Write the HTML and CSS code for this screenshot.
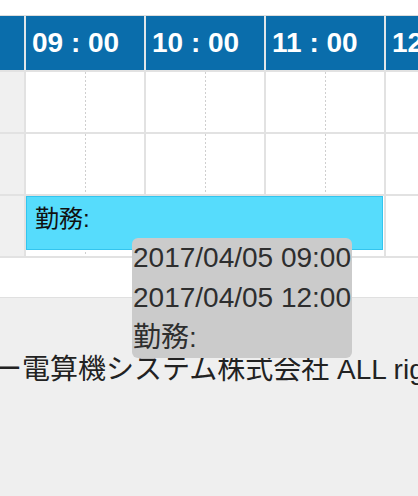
FILE: index.html
```html
<!DOCTYPE html>
<html lang="ja">
<head>
<meta charset="utf-8">
<title>勤務スケジュール</title>
<link rel="stylesheet" href="styles.css">
</head>
<body>
<div class="scheduler">
  <div class="row head">
    <div class="cell corner"></div>
    <div class="cell hour">09 : 00</div>
    <div class="cell hour">10 : 00</div>
    <div class="cell hour">11 : 00</div>
    <div class="cell hour">12 : 00</div>
  </div>
  <div class="row body">
    <div class="cell side"></div>
    <div class="cell slot"></div>
    <div class="cell slot"></div>
    <div class="cell slot"></div>
    <div class="cell slot"></div>
  </div>
  <div class="row body">
    <div class="cell side"></div>
    <div class="cell slot"></div>
    <div class="cell slot"></div>
    <div class="cell slot"></div>
    <div class="cell slot"></div>
  </div>
  <div class="row body last">
    <div class="cell side"></div>
    <div class="cell slot"></div>
    <div class="cell slot"></div>
    <div class="cell slot"></div>
    <div class="cell slot"></div>
    <div class="event">勤務:</div>
    <div class="tooltip">
      <div>2017/04/05 09:00</div>
      <div>2017/04/05 12:00</div>
      <div>勤務:</div>
    </div>
  </div>
</div>
<footer class="footer">
  <p class="copy">©2017 センター電算機システム株式会社 ALL rights reserved.</p>
</footer>
</body>
</html>
```
FILE: styles.css
```css
html, body {
  margin: 0;
  padding: 0;
  background: #ffffff;
  font-family: "Liberation Sans", "Noto Sans CJK JP", sans-serif;
  color: #333333;
  overflow: hidden;
}

.scheduler {
  margin-top: 15px;
  margin-bottom: 39px;
  border-top: 1px solid #dcdcdc;
  border-bottom: 2px solid #e2e2e2;
  position: relative;
  z-index: 2;
}

.row {
  display: flex;
  width: 504px;
}

.cell {
  box-sizing: border-box;
  flex: none;
}

.corner,
.side {
  width: 24px;
}

.head {
  height: 54px;
  background: #0a6dab;
}

.hour {
  width: 120px;
  border-left: 2px solid #dfe6ea;
  color: #ffffff;
  font-weight: bold;
  font-size: 28px;
  display: flex;
  align-items: center;
  padding-left: 6px;
}

.body {
  height: 62px;
  border-top: 2px solid #e2e2e2;
  box-sizing: border-box;
  position: relative;
}

.side {
  background: #f0f0f0;
}

.slot {
  width: 120px;
  border-left: 2px solid #e2e2e2;
  background-image: repeating-linear-gradient(to bottom, #cfcfcf 0 2px, transparent 2px 4px);
  background-size: 1px 100%;
  background-position: 59px 0;
  background-repeat: no-repeat;
}

.event {
  position: absolute;
  left: 26px;
  top: 0;
  width: 357px;
  height: 54px;
  box-sizing: border-box;
  background: #56dcfc;
  border: 1px solid #33c5ef;
  font-size: 24px;
  line-height: 30px;
  padding: 7px 0 0 8px;
  color: #111111;
}

.tooltip {
  position: absolute;
  left: 132px;
  top: 42px;
  background: #cbcbcb;
  border-radius: 6px;
  padding: 0 1px;
  font-size: 28px;
  line-height: 40px;
  white-space: nowrap;
  color: #2e2e2e;
}

.footer {
  background: #efefef;
  border-top: 1px solid #e0e0e0;
  min-height: 210px;
  display: flex;
  justify-content: center;
  overflow: hidden;
  padding-right: 12px;
}

.copy {
  margin: 0;
  padding-top: 52px;
  font-size: 28px;
  line-height: 40px;
  white-space: nowrap;
  color: #222222;
}
```
